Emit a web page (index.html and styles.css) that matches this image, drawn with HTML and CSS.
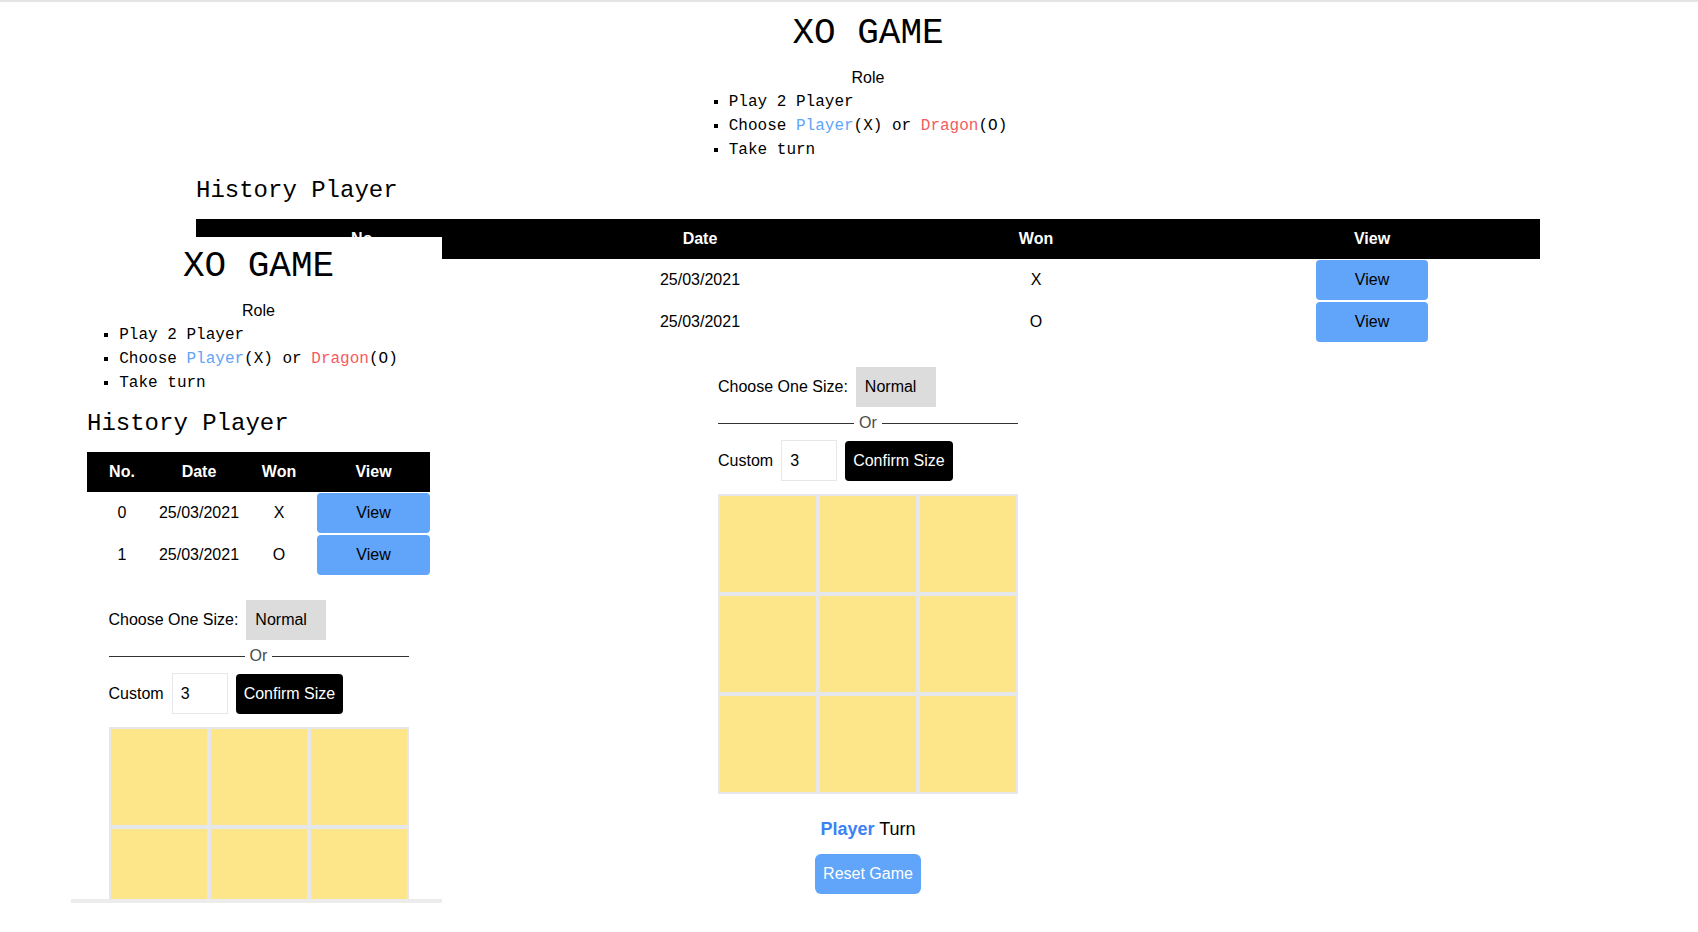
FILE: index.html
```html
<!DOCTYPE html>
<html lang="en">
<head>
<meta charset="utf-8">
<title>XO GAME</title>
<link rel="stylesheet" href="styles.css">
</head>
<body>
<div class="page">
  <div class="app app-wide">
    <h1 class="title">XO GAME</h1>
    <div class="rules">
      <p class="role">Role</p>
      <ul class="rule-list">
        <li>Play 2 Player</li>
        <li>Choose <span class="c-player">Player</span>(X) or <span class="c-dragon">Dragon</span>(O)</li>
        <li>Take turn</li>
      </ul>
    </div>
    <h2 class="history-title">History Player</h2>
    <table class="history">
      <thead>
        <tr><th class="col-no">No.</th><th class="col-date">Date</th><th class="col-won">Won</th><th class="col-view">View</th></tr>
      </thead>
      <tbody>
        <tr><td>0</td><td>25/03/2021</td><td>X</td><td><button class="btn-view">View</button></td></tr>
        <tr><td>1</td><td>25/03/2021</td><td>O</td><td><button class="btn-view">View</button></td></tr>
      </tbody>
    </table>
    <div class="game">
      <div class="size-row"><span class="size-label">Choose One Size:</span><span class="size-select">Normal</span></div>
      <div class="divider"><span class="line"></span><span class="or">Or</span><span class="line"></span></div>
      <div class="custom-row"><span class="custom-label">Custom</span><input class="custom-input" type="text" value="3"><button class="btn-confirm">Confirm Size</button></div>
      <div class="board">
        <div class="cell"></div><div class="cell"></div><div class="cell"></div>
        <div class="cell"></div><div class="cell"></div><div class="cell"></div>
        <div class="cell"></div><div class="cell"></div><div class="cell"></div>
      </div>
      <p class="turn"><b class="turn-player">Player</b> Turn</p>
      <button class="btn-reset">Reset Game</button>
    </div>
  </div>

  <div class="preview">
    <div class="app app-narrow">
      <h1 class="title">XO GAME</h1>
      <div class="rules">
        <p class="role">Role</p>
        <ul class="rule-list">
          <li>Play 2 Player</li>
          <li>Choose <span class="c-player">Player</span>(X) or <span class="c-dragon">Dragon</span>(O)</li>
          <li>Take turn</li>
        </ul>
      </div>
      <h2 class="history-title">History Player</h2>
      <table class="history">
        <thead>
          <tr><th class="col-no">No.</th><th class="col-date">Date</th><th class="col-won">Won</th><th class="col-view">View</th></tr>
        </thead>
        <tbody>
          <tr><td>0</td><td>25/03/2021</td><td>X</td><td><button class="btn-view">View</button></td></tr>
          <tr><td>1</td><td>25/03/2021</td><td>O</td><td><button class="btn-view">View</button></td></tr>
        </tbody>
      </table>
      <div class="game">
        <div class="size-row"><span class="size-label">Choose One Size:</span><span class="size-select">Normal</span></div>
        <div class="divider"><span class="line"></span><span class="or">Or</span><span class="line"></span></div>
        <div class="custom-row"><span class="custom-label">Custom</span><input class="custom-input" type="text" value="3"><button class="btn-confirm">Confirm Size</button></div>
        <div class="board">
          <div class="cell"></div><div class="cell"></div><div class="cell"></div>
          <div class="cell"></div><div class="cell"></div><div class="cell"></div>
          <div class="cell"></div><div class="cell"></div><div class="cell"></div>
        </div>
      </div>
    </div>
  </div>
</div>
</body>
</html>
```

FILE: styles.css
```css
* { box-sizing: border-box; }

html, body {
  margin: 0;
  padding: 0;
  background: #fff;
}

body {
  font-family: "Liberation Sans", Arial, sans-serif;
  font-size: 16px;
  line-height: 24px;
  color: #000;
  overflow: hidden;
}

.page {
  position: relative;
  width: 1698px;
  height: 932px;
  border-top: 2px solid #e4e4e4;
}

.app {
  padding-top: 12px;
}

.app-wide {
  width: 1344px;
  margin-left: 196px;
}

.app-narrow {
  width: 343px;
  margin-left: 16px;
  padding-top: 10px;
}

.title {
  margin: 0;
  font-family: "Liberation Mono", "Courier New", monospace;
  font-size: 36px;
  line-height: 40px;
  font-weight: 400;
  text-align: center;
}

.rules {
  margin-top: 12px;
  text-align: center;
}

.role {
  margin: 0;
  line-height: 24px;
}

.rule-list {
  display: inline-block;
  margin: 0;
  padding: 0;
  text-align: left;
  list-style: square outside;
  font-family: "Liberation Mono", "Courier New", monospace;
  font-size: 16px;
  line-height: 24px;
}

.c-player { color: #60a5fa; }
.c-dragon { color: #f65a5e; }

.history-title {
  margin: 13px 0 0;
  font-family: "Liberation Mono", "Courier New", monospace;
  font-size: 24px;
  line-height: 32px;
  font-weight: 400;
}

.history {
  margin-top: 12px;
  width: 100%;
  border-collapse: collapse;
  table-layout: fixed;
}

.history th {
  background: #000;
  color: #fff;
  font-weight: 700;
  height: 40px;
  padding: 0;
  text-align: center;
}

.history td {
  padding: 1px 0;
  text-align: center;
  vertical-align: middle;
  height: 42px;
}

.app-wide .history th { width: 25%; }

.app-narrow .col-no { width: 70px; }
.app-narrow .col-date { width: 84px; }
.app-narrow .col-won { width: 76px; }
.app-narrow .col-view { width: 113px; }

.btn-view {
  display: inline-block;
  border: 0;
  margin: 0;
  background: #60a5fa;
  color: #000;
  font-family: inherit;
  font-size: 16px;
  line-height: 24px;
  height: 40px;
  padding: 8px 39px;
  border-radius: 4px;
  vertical-align: middle;
}

.game {
  width: 300px;
  margin: 24px auto 0;
  text-align: center;
}

.size-row {
  display: flex;
  align-items: center;
  height: 40px;
}

.size-label {
  margin-right: 8px;
}

.size-select {
  width: 80px;
  height: 40px;
  line-height: 40px;
  padding-left: 9px;
  background: #dcdcdc;
  text-align: left;
}

.divider {
  display: flex;
  align-items: center;
  height: 24px;
  margin-top: 4px;
}

.line {
  flex: 1;
  height: 0;
  border-top: 1px solid #333;
}

.or {
  margin: 0 5px;
  color: #4b4b4b;
}

.custom-row {
  display: flex;
  align-items: center;
  height: 41px;
  margin-top: 5px;
}

.custom-input {
  width: 56px;
  height: 41px;
  margin: 0 8px;
  padding: 0 0 0 8px;
  border: 1px solid #e5e7eb;
  font-family: inherit;
  font-size: 16px;
  color: #000;
  outline: none;
}

.btn-confirm {
  height: 40px;
  border: 0;
  padding: 8px;
  background: #000;
  color: #fff;
  font-family: inherit;
  font-size: 16px;
  line-height: 24px;
  border-radius: 4px;
}

.board {
  margin-top: 13px;
  display: grid;
  grid-template-columns: repeat(3, 100px);
  grid-template-rows: repeat(3, 100px);
}

.cell {
  background: #fde68a;
  border: 2px solid #e5e7eb;
}

.turn {
  margin: 21px 0 0;
  font-size: 18px;
  line-height: 28px;
}

.turn-player {
  color: #3b82f6;
}

.btn-reset {
  margin-top: 11px;
  height: 40px;
  border: 0;
  padding: 8px;
  background: #60a5fa;
  color: #fff;
  font-family: inherit;
  font-size: 16px;
  line-height: 24px;
  border-radius: 6px;
}

.preview {
  position: absolute;
  left: 71px;
  top: 235px;
  width: 371px;
  height: 666px;
  background: #fff;
  overflow: hidden;
  border-bottom: 4px solid #ececec;
  z-index: 2;
}
```
